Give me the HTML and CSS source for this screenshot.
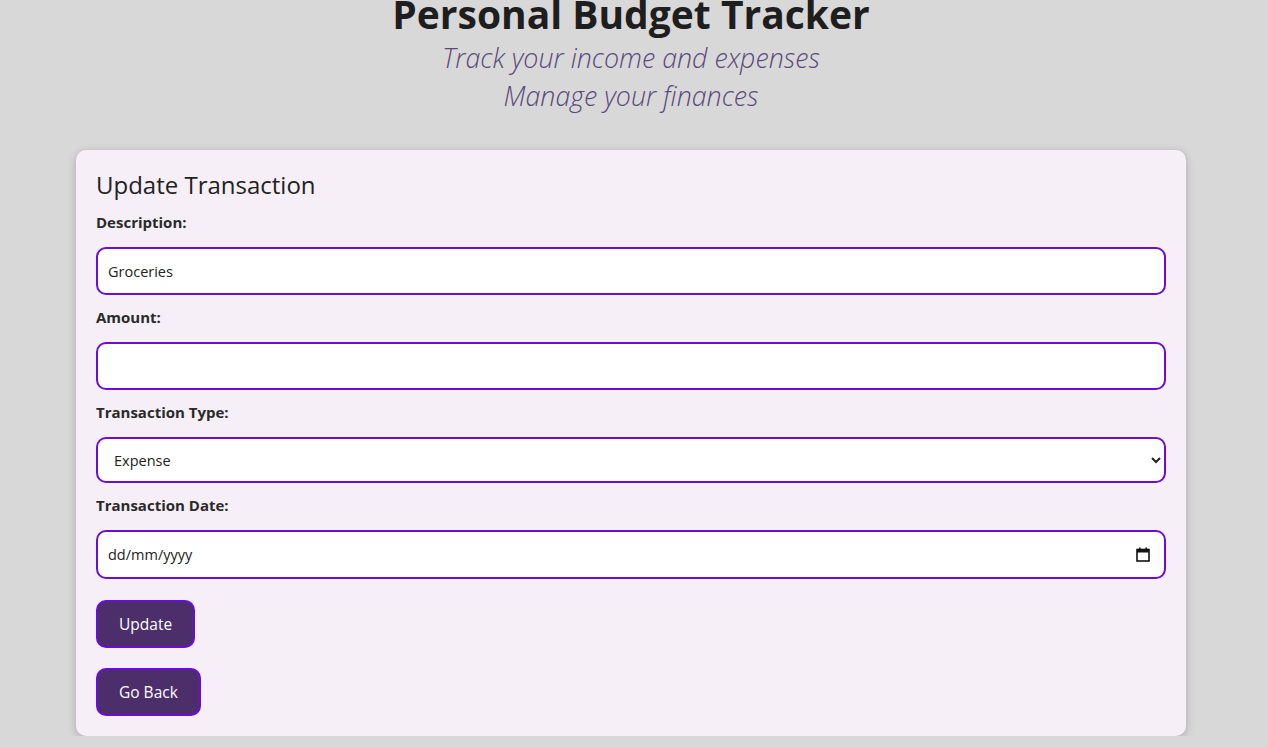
FILE: index.html
```html
<!DOCTYPE html>
<html lang="en">
<head>
<meta charset="utf-8">
<title>Personal Budget Tracker</title>
<link rel="stylesheet" href="styles.css">
</head>
<body>
<header class="header">
  <h1 class="title">Personal Budget Tracker</h1>
  <p class="subtitle">Track your income and expenses</p>
  <p class="subtitle">Manage your finances</p>
</header>
<main class="card">
  <h2 class="card-title">Update Transaction</h2>
  <form class="form">
    <label class="label" for="desc">Description:</label>
    <input class="field" id="desc" type="text" value="Groceries">
    <label class="label" for="amount">Amount:</label>
    <input class="field" id="amount" type="number">
    <label class="label" for="type">Transaction Type:</label>
    <select class="field select" id="type">
      <option>Expense</option>
      <option>Income</option>
    </select>
    <label class="label" for="date">Transaction Date:</label>
    <div class="field date-field">
      <input class="date-input" id="date" type="text" placeholder="dd/mm/yyyy">
      <svg class="cal-icon" width="14" height="15" viewBox="0 0 14 15" aria-hidden="true">
        <rect x="1" y="2.5" width="12" height="11.5" fill="none" stroke="#111" stroke-width="1.6"/>
        <rect x="1" y="2.5" width="12" height="3" fill="#111"/>
        <rect x="3" y="0.5" width="1.6" height="3" fill="#111"/>
        <rect x="9.4" y="0.5" width="1.6" height="3" fill="#111"/>
      </svg>
    </div>
    <button class="btn btn-update" type="button">Update</button>
    <button class="btn" type="button">Go Back</button>
  </form>
</main>
</body>
</html>
```
FILE: styles.css
```css
* { box-sizing: border-box; }
html, body { margin: 0; padding: 0; }
body {
  background: #d8d8d8;
  font-family: "Open Sans", "Noto Sans", sans-serif;
  color: #222;
}
.header {
  text-align: center;
  margin-top: -12px;
  padding-right: 6px;
}
.title {
  margin: 0;
  font-size: 39px;
  font-weight: 700;
  line-height: 51px;
  color: #1e1e1e;
}
.subtitle {
  margin: 0;
  font-size: 26.8px;
  font-style: italic;
  font-weight: 300;
  line-height: 38px;
  color: #5a4a7c;
}
.card {
  width: 1110px;
  margin: 35px 0 0 76px;
  background: #f6eff7;
  border-radius: 10px;
  box-shadow: 0 2px 8px rgba(0,0,0,0.22);
  padding: 20px;
}
.card-title {
  margin: 0 0 10px;
  font-size: 24px;
  font-weight: 400;
  line-height: 30px;
  color: #222;
}
.form {
  display: flex;
  flex-direction: column;
  align-items: flex-start;
}
.label {
  font-size: 15px;
  font-weight: 700;
  line-height: 22px;
  color: #2a2a2a;
  margin-top: 1px;
  margin-bottom: 14px;
}
.field {
  width: 100%;
  height: 48px;
  border: 2px solid #6a0dd6;
  border-radius: 10px;
  background: #fff;
  padding: 0 10px;
  font-family: inherit;
  font-size: 14.5px;
  color: #222;
  margin-bottom: 10px;
  outline: none;
}
.select {
  height: 46px;
  padding: 0 8px 0 12px;
}
.date-field {
  display: flex;
  align-items: center;
  height: 49px;
  padding: 0 14px 0 10px;
}
.date-input {
  flex: 1;
  border: none;
  outline: none;
  background: transparent;
  padding: 0;
  font-family: inherit;
  font-size: 14.5px;
  color: #222;
}
.date-input::placeholder { color: #222; opacity: 1; }
.cal-icon { flex: none; }
.btn {
  background: #4b2e6a;
  color: #fff;
  border: 2px solid #6a0dd6;
  border-radius: 10px;
  height: 48px;
  padding: 0 21px;
  font-family: inherit;
  font-size: 15.5px;
  margin-top: 20px;
  cursor: pointer;
}
.btn-update { margin-top: 11px; }
```
